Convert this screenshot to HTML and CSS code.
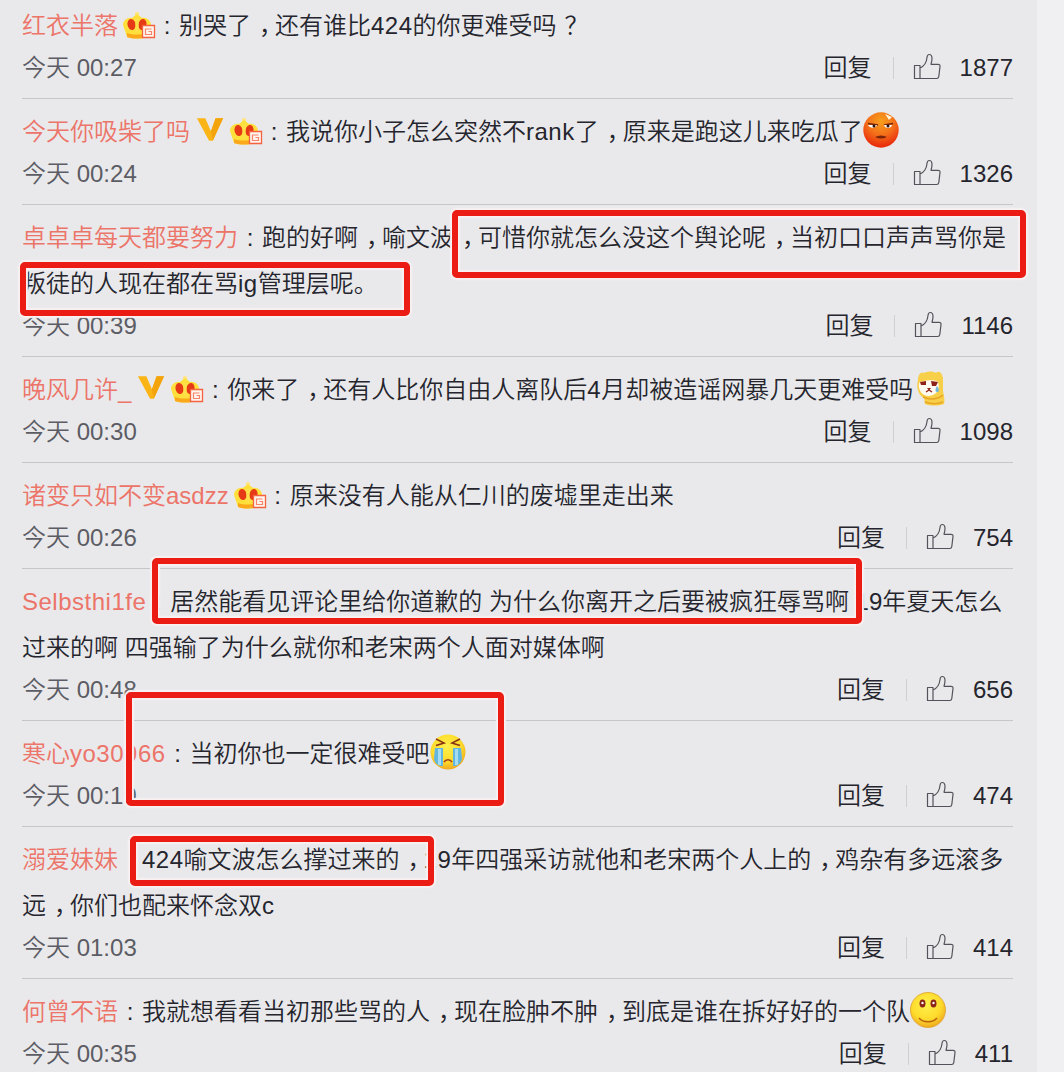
FILE: index.html
```
<!DOCTYPE html>
<html lang="zh-CN">

<head>
  <meta charset="utf-8">
  <title>评论</title>
  <link rel="stylesheet" href="styles.css">
</head>

<body>
  <!-- shared icons -->
  <svg class="sprite" width="0" height="0">
    <symbol id="like" viewBox="0 0 28 28">
      <path d="M1.500 12.500h5.500v13H1.500zM7 15c3.500-1.500 6.500-5 7-10.500.2-2 .9-3 2.200-3 2 0 2.800 1.600 2.800 4 0 2-.4 4-1 5.800h7c1.600 0 2.200.8 2 2.200l-1.200 10c-.2 1.400-.9 2-2.100 2H7" fill="none" stroke="#53535c" stroke-width="1.200" stroke-linejoin="round"/>
    </symbol>
    <symbol id="vip" viewBox="0 0 30 26">
      <path d="M1 1h9l6 14 5-14h8L18 25h-4z" fill="#fbb416"/>
      <path d="M21 1h8L18 25l-2-10z" fill="#f3a30c"/>
    </symbol>
    <symbol id="crown" viewBox="0 0 34 28">
      <circle cx="15" cy="3" r="2.200" fill="#ffe58a"/>
      <path d="M1 14c0-5 5-8 9-7l5-4 5 4c4-1 9 2 9 7l-4 12c-6 2-14 2-20 0z" fill="#ffdf3c"/>
      <path d="M5 22c6 2 14 2 20 0v4c-6 2-14 2-20 0z" fill="#fba81c"/>
      <ellipse cx="9.500" cy="13.500" rx="4" ry="5.500" fill="#e63a16" transform="rotate(-12 9.500 13.500)"/>
      <ellipse cx="20.500" cy="13.500" rx="4" ry="5.500" fill="#e63a16" transform="rotate(12 20.500 13.500)"/>
      <path d="M12.500 8h5v2h-1v11h-3V10h-1z" fill="#ffe04a"/>
      <path d="M20.500 14.500h12v12h-12z" fill="#fff4ee" stroke="#f4623f" stroke-width="1.300"/>
      <path d="M29.500 18h-6v5.500h6v-3h-3" fill="none" stroke="#f7836a" stroke-width="1.200"/>
    </symbol>
    <radialGradient id="redFace" cx=".5" cy=".25" r=".7">
      <stop offset="0" stop-color="#f7a01c"/>
      <stop offset=".55" stop-color="#f4701a"/>
      <stop offset="1" stop-color="#e92f0c"/>
    </radialGradient>
    <radialGradient id="yellowFace" cx=".45" cy=".35" r=".65">
      <stop offset="0" stop-color="#fff04c"/>
      <stop offset=".65" stop-color="#fddb2c"/>
      <stop offset="1" stop-color="#efab20"/>
    </radialGradient>
  </svg>

  <div class="comments">
    <div class="comment">
      <div class="content"><a class="author">红衣半落</a><svg class="crown"><use href="#crown"/></svg><span class="colon">:</span>别哭了<span class="comma">，</span>还有谁比<span class="latin">424</span>的你更难受吗<span class="comma">？</span></div>
      <div class="footer"><span class="time">今天 00:27</span><span class="reply">回复</span><span class="divider"></span><svg class="like"><use href="#like"/></svg><span class="count">1877</span></div>
    </div>

    <div class="comment">
      <div class="content"><a class="author">今天你吸柴了吗</a><svg class="vip"><use href="#vip"/></svg><svg class="crown"><use href="#crown"/></svg><span class="colon">:</span>我说你小子怎么突然不<span class="latin">rank</span>了<span class="comma">，</span>原来是跑这儿来吃瓜了<svg class="emoji" viewBox="0 0 36 36">
          <circle cx="18" cy="18" r="17.700" fill="url(#redFace)"/>
          <path d="M22 2l7 3-3 3z" fill="#fff3d8"/>
          <path d="M5 11.500l10 1.500M30 11.500l-9 1.500" stroke="#7c2408" stroke-width="1.500"/>
          <path d="M5 13h9c-1 3-7 4-9 0zM21 13h8c-1 4-7 4-8 0z" fill="#fff"/>
          <circle cx="11" cy="14" r="1.500" fill="#30160c"/>
          <circle cx="25" cy="14" r="1.500" fill="#30160c"/>
          <path d="M12 25c4-2 8-2 12 0-4 2-8 2-12 0z" fill="#7c2408"/>
        </svg></div>
      <div class="footer"><span class="time">今天 00:24</span><span class="reply">回复</span><span class="divider"></span><svg class="like"><use href="#like"/></svg><span class="count">1326</span></div>
    </div>

    <div class="comment">
      <div class="content"><a class="author">卓卓卓每天都要努力</a><span class="colon">:</span>跑的好啊<span class="comma">，</span>喻文波<span class="comma">，</span>可惜你就怎么没这个舆论呢<span class="comma">，</span>当初口口声声骂你是<br>叛徒的人现在都在骂<span class="latin">ig</span>管理层呢。</div>
      <div class="footer"><span class="time">今天 00:39</span><span class="reply">回复</span><span class="divider"></span><svg class="like"><use href="#like"/></svg><span class="count">1146</span></div>
    </div>

    <div class="comment">
      <div class="content"><a class="author">晚风几许_</a><svg class="vip"><use href="#vip"/></svg><svg class="crown"><use href="#crown"/></svg><span class="colon">:</span>你来了<span class="comma">，</span>还有人比你自由人离队后<span class="latin">4</span>月却被造谣网暴几天更难受吗<svg class="emoji" viewBox="0 0 36 36">
          <path d="M5 10c0-5 3-9 6-7 4-2 9-2 12 0 3-3 6 0 7 5v13c1 5 2 9 1 13-6 2-14 2-19 0l-1-6c-6-3-8-11-6-18z" fill="#f8cf48"/>
          <path d="M10 27c6 3 14 3 20-2M12 32c6 2 13 2 18 0" fill="none" stroke="#e8a525" stroke-width="1.500"/>
          <path d="M6 13c2-3 17-4 19-1 2 6 0 13-9 14-8 0-11-7-10-13z" fill="#fffaf0"/>
          <path d="M7 12l6-1v4H8zM18 11l7 1-2 4h-4zM14 18h4l-2 2.500z" fill="#8e2219"/>
          <path d="M13 22l3-2 3 2" fill="none" stroke="#8e2219" stroke-width="1.300"/>
          <path d="M24 16c3 4 2 6 0 6s-2-3 0-6z" fill="#71b9df"/>
        </svg></div>
      <div class="footer"><span class="time">今天 00:30</span><span class="reply">回复</span><span class="divider"></span><svg class="like"><use href="#like"/></svg><span class="count">1098</span></div>
    </div>

    <div class="comment">
      <div class="content"><a class="author">诸变只如不变asdzz</a><svg class="crown"><use href="#crown"/></svg><span class="colon">:</span>原来没有人能从仁川的废墟里走出来</div>
      <div class="footer"><span class="time">今天 00:26</span><span class="reply">回复</span><span class="divider"></span><svg class="like"><use href="#like"/></svg><span class="count">754</span></div>
    </div>

    <div class="comment">
      <div class="content"><a class="author latin">Selbsthi1fe</a><span class="colon">:</span>居然能看见评论里给你道歉的 为什么你离开之后要被疯狂辱骂啊 19年夏天怎么<br>过来的啊 四强输了为什么就你和老宋两个人面对媒体啊</div>
      <div class="footer"><span class="time">今天 00:48</span><span class="reply">回复</span><span class="divider"></span><svg class="like"><use href="#like"/></svg><span class="count">656</span></div>
    </div>

    <div class="comment">
      <div class="content"><a class="author">寒心<span class="latin">yo30966</span></a><span class="colon">:</span>当初你也一定很难受吧<svg class="emoji" viewBox="0 0 36 36">
          <circle cx="18" cy="18" r="17.500" fill="url(#yellowFace)"/>
          <path d="M5 14h8v18c-5 1-9-4-9-8zM23 14h8l1 10c0 4-4 9-9 8z" fill="#62b6df"/>
          <path d="M8 15h3v16H8zM25 15h3v16h-3z" fill="#a5dcf0"/>
          <path d="M6 5l8 4-8 2.500M30 5l-8 4 8 2.500" fill="none" stroke="#8b3512" stroke-width="1.600"/>
          <path d="M14 28c2-3 6-3 8 0" fill="none" stroke="#a43b16" stroke-width="1.600"/>
        </svg></div>
      <div class="footer"><span class="time">今天 00:19</span><span class="reply">回复</span><span class="divider"></span><svg class="like"><use href="#like"/></svg><span class="count">474</span></div>
    </div>

    <div class="comment">
      <div class="content"><a class="author">溺爱妹妹</a><span class="colon">:</span><span class="latin">424</span>喻文波怎么撑过来的<span class="comma">，</span><span class="latin">19</span>年四强采访就他和老宋两个人上的<span class="comma">，</span>鸡杂有多远滚多<br>远<span class="comma">，</span>你们也配来怀念双c</div>
      <div class="footer"><span class="time">今天 01:03</span><span class="reply">回复</span><span class="divider"></span><svg class="like"><use href="#like"/></svg><span class="count">414</span></div>
    </div>

    <div class="comment">
      <div class="content"><a class="author">何曾不语</a><span class="colon">:</span>我就想看看当初那些骂的人<span class="comma">，</span>现在脸肿不肿<span class="comma">，</span>到底是谁在拆好好的一个队<svg class="emoji" viewBox="0 0 36 36">
          <circle cx="18" cy="18" r="17.500" fill="url(#yellowFace)" stroke="#dfa02c" stroke-width=".8"/>
          <ellipse cx="12.500" cy="11.500" rx="3" ry="4" fill="#8c2318"/>
          <ellipse cx="23.500" cy="11.500" rx="3" ry="4" fill="#8c2318"/>
          <circle cx="12.500" cy="11" r="1.200" fill="#fff"/>
          <circle cx="23.500" cy="11" r="1.200" fill="#fff"/>
          <path d="M9 26c4 5 14 5 18 0" fill="none" stroke="#b9600e" stroke-width="1.300"/>
        </svg></div>
      <div class="footer"><span class="time">今天 00:35</span><span class="reply">回复</span><span class="divider"></span><svg class="like"><use href="#like"/></svg><span class="count">411</span></div>
    </div>
  </div>

  <!-- red marker boxes -->
  <div class="mark mark-1"></div>
  <div class="mark mark-2"></div>
  <div class="mark mark-3"></div>
  <div class="mark mark-4"></div>
  <div class="mark mark-5"></div>
</body>

</html>
```
FILE: styles.css
```
body {
  position: relative;
  margin: 0;
  height: 1072px;
  overflow: hidden;
  background-color: #f0f0f3;
  font-family: "Liberation Sans", "Noto Sans CJK SC", sans-serif;
  font-size: 24px;
  font-weight: 350;
  color: #25252d;
}

.sprite {
  position: absolute;
}

.comments {
  width: 991px;
  height: 1072px;
  padding: 0 24px 0 22px;
  overflow: hidden;
  background-color: #e9e9eb;
}

.comment {
  padding: 10px 0 11px;
  border-bottom: 1px solid #c6c6ca;
}

.comment:first-child {
  padding-top: 3px;
}

.content {
  line-height: 46px;
  white-space: nowrap;
}

.content svg {
  vertical-align: middle;
}

.author {
  color: #ec7469;
}

.latin {
  letter-spacing: 0.5px;
}

.colon {
  display: inline-block;
  width: 24px;
  text-align: center;
}

/* half-width glyph, centred in a full-width cell */
.comma {
  padding: 0 4px 0 8px;
  font-family: "Noto Sans CJK SC", sans-serif;
  font-feature-settings: "halt";
  line-height: 1;
}

.crown {
  width: 34px;
  height: 28px;
  margin: -6px -1px 0 4px;
}

.vip {
  width: 28px;
  height: 25px;
  margin: -8px 1px 0 6px;
}

.emoji {
  width: 36px;
  height: 36px;
  margin-top: -8px;
}

.footer {
  display: flex;
  align-items: center;
  height: 38px;
  line-height: 38px;
}

.time {
  margin-right: auto;
  color: #5c5c64;
}

.divider {
  width: 1px;
  height: 22px;
  margin: 0 19px 0 21px;
  background-color: #cfcfd4;
}

.like {
  width: 28px;
  height: 28px;
  margin: -2px 19px 0 0;
}

.mark {
  position: absolute;
  box-sizing: border-box;
  border: 6px solid #ea1c14;
  border-radius: 5px;
  box-shadow: 0 0 1px 2px #f8f0f1, inset 0 0 1px 2px #f8f0f1;
}

.mark-1 {
  left: 452px;
  top: 210px;
  width: 574px;
  height: 68px;
}

.mark-2 {
  left: 20px;
  top: 262px;
  width: 390px;
  height: 54px;
}

.mark-3 {
  left: 152px;
  top: 558px;
  width: 710px;
  height: 66px;
}

.mark-4 {
  left: 126px;
  top: 692px;
  width: 378px;
  height: 114px;
}

.mark-5 {
  left: 130px;
  top: 836px;
  width: 304px;
  height: 50px;
}
```
